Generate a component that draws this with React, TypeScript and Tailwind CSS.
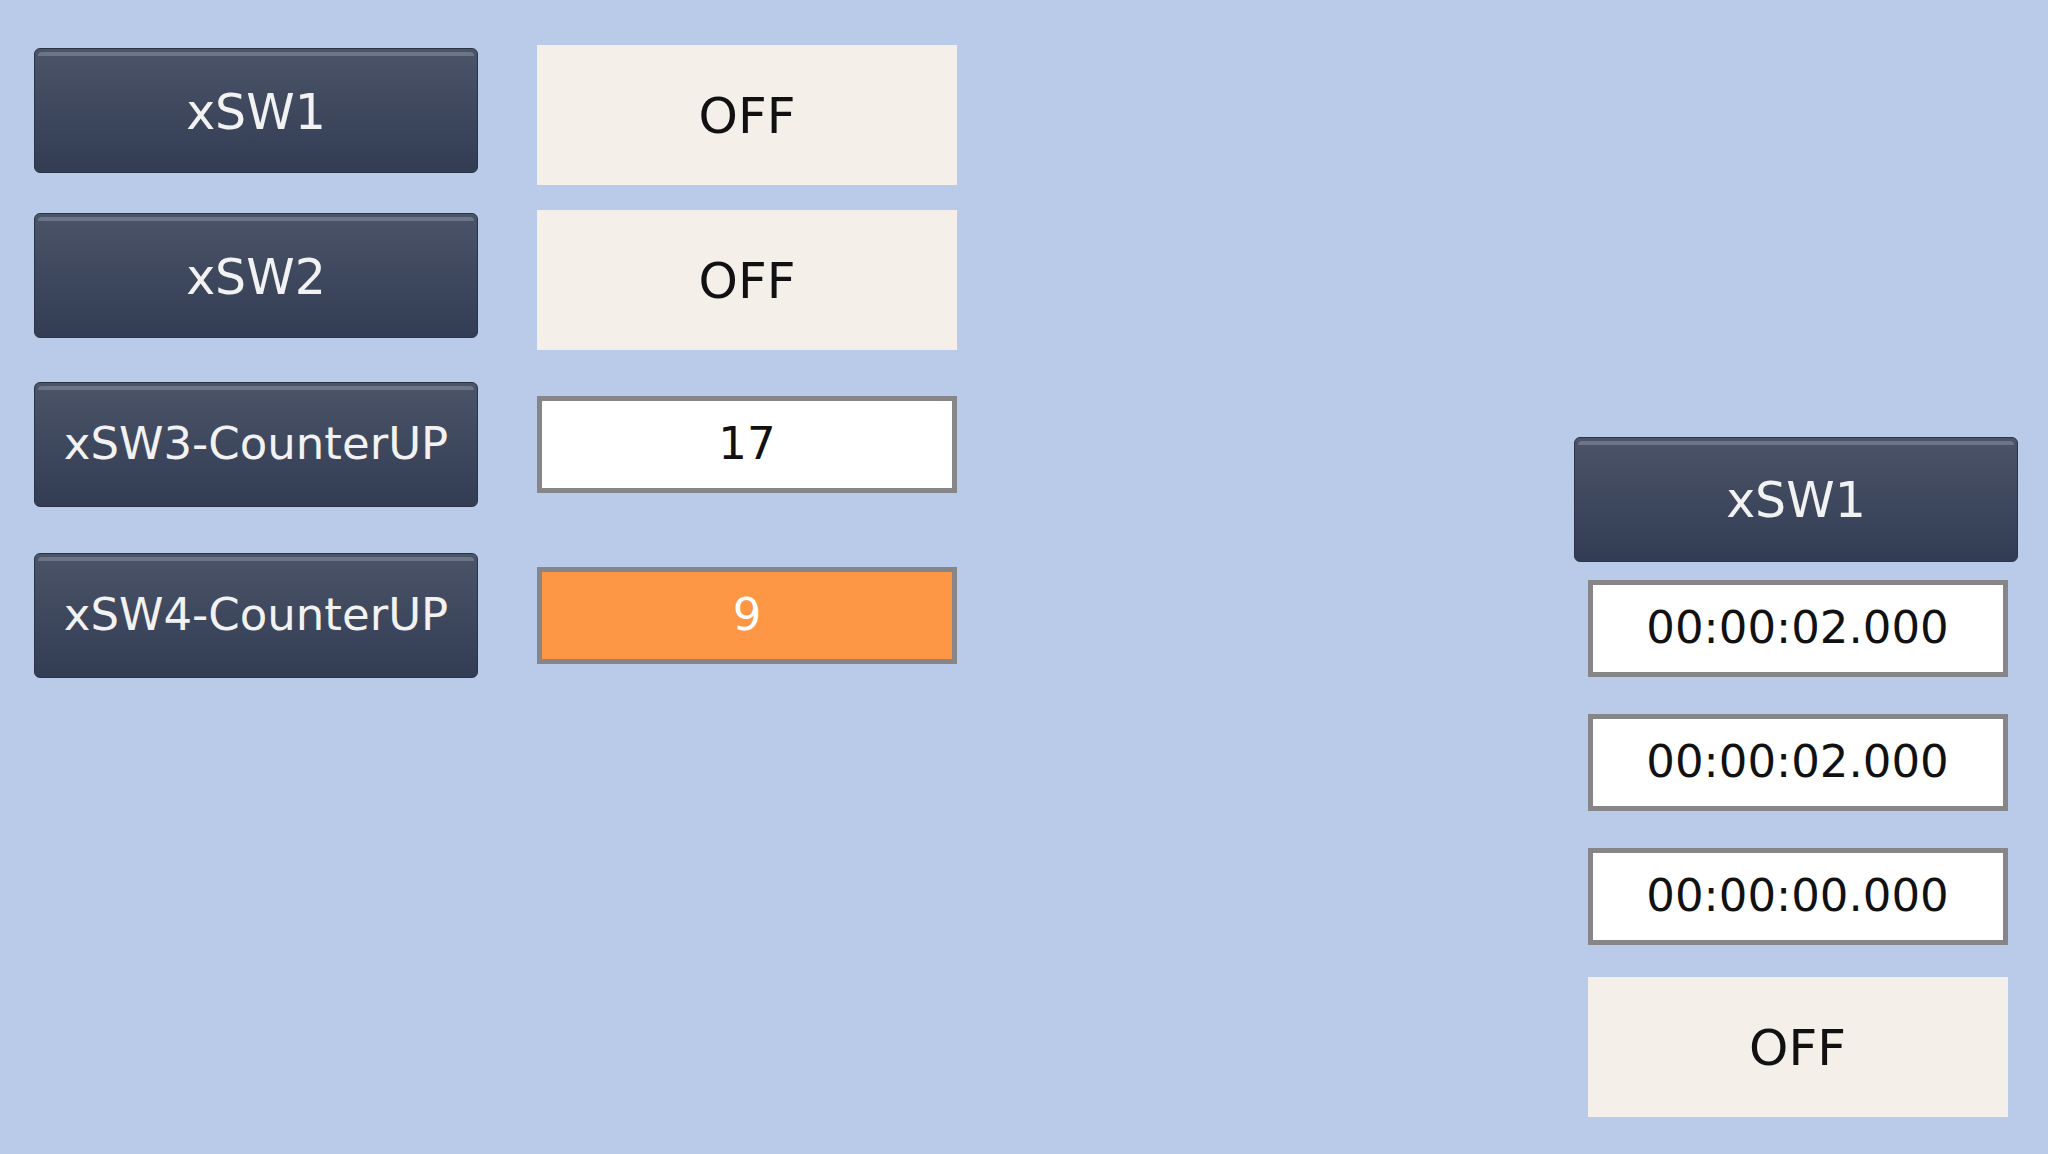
import React from "react";

const font = { fontFamily: '"DejaVu Sans", "Liberation Sans", sans-serif' };

// dark HMI push button
function HmiButton(props: { label: string; size: string; className?: string; textCls?: string }) {
  const { label, size, className = "", textCls = "" } = props;
  return (
    <div
      className={`relative flex h-[125px] w-[444px] shrink-0 items-center justify-center rounded-[6px] border border-[#2c3345] bg-gradient-to-b from-[#4b5468] to-[#323c53] text-[#f2f2f2] ${size} ${className}`}
    >
      <div className="absolute left-[3px] right-[3px] top-[3px] h-[4px] rounded-t-[4px] bg-[#6d7588]" />
      <span className={`leading-none ${textCls}`}>{label}</span>
    </div>
  );
}

function Lamp(props: { text: string; className?: string }) {
  return (
    <div
      className={`flex h-[140px] w-[420px] shrink-0 items-center justify-center bg-[#f4efe9] text-[50px] leading-none text-[#111] ${props.className || ""}`}
    >
      <span className="mt-[2px]">{props.text}</span>
    </div>
  );
}

function ValueBox(props: { value: string; tone?: "white" | "orange"; className?: string }) {
  const { value, tone = "white", className = "" } = props;
  const toneCls = tone === "orange" ? "bg-[#fe9745] text-white" : "bg-white text-[#111]";
  return (
    <div
      className={`flex h-[97px] w-[420px] shrink-0 items-center justify-center border-[5px] border-[#868688] text-[45px] leading-none ${toneCls} ${className}`}
    >
      <span className="-mt-[2px]">{value}</span>
    </div>
  );
}

export default function App() {
  return (
    <div className="flex h-[1154px] w-[2048px] overflow-hidden bg-[#b9cbe9]" style={font}>
      {/* left: switches and their states */}
      <div className="flex flex-col pl-[34px] pt-[45px]">
        <div className="flex items-start gap-[59px]">
          <HmiButton label="xSW1" size="text-[49px]" className="mt-[3px]" textCls="mt-[4px]" />
          <Lamp text="OFF" />
        </div>
        <div className="mt-[25px] flex items-start gap-[59px]">
          <HmiButton label="xSW2" size="text-[49px]" className="mt-[3px]" textCls="mt-[4px]" />
          <Lamp text="OFF" />
        </div>
        <div className="mt-[32px] flex items-center gap-[59px]">
          <HmiButton label="xSW3-CounterUP" size="text-[45px]" textCls="-mt-[2px]" />
          <ValueBox value="17" />
        </div>
        <div className="mt-[46px] flex items-center gap-[59px]">
          <HmiButton label="xSW4-CounterUP" size="text-[45px]" textCls="-mt-[2px]" />
          <ValueBox value="9" tone="orange" />
        </div>
      </div>

      {/* right: timer block */}
      <div className="ml-auto mr-[30px] mt-[437px] flex flex-col items-center">
        <HmiButton label="xSW1" size="text-[49px]" textCls="mt-[2px]" />
        <ValueBox value="00:00:02.000" className="mt-[18px] ml-[3px]" />
        <ValueBox value="00:00:02.000" className="mt-[37px] ml-[3px]" />
        <ValueBox value="00:00:00.000" className="mt-[37px] ml-[3px]" />
        <Lamp text="OFF" className="mt-[32px] ml-[3px] h-[139px]" />
      </div>
    </div>
  );
}
